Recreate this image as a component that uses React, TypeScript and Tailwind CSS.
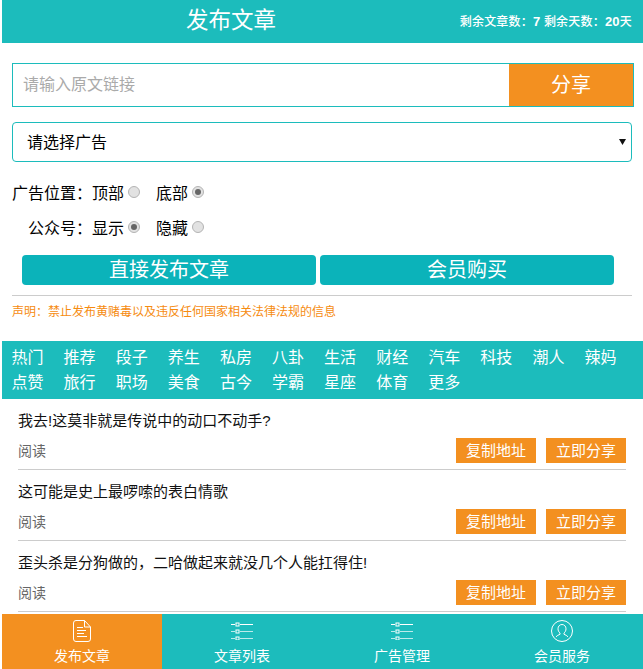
// App.tsx
const channels = [
  '热门', '推荐', '段子', '养生', '私房', '八卦', '生活', '财经', '汽车', '科技', '潮人', '辣妈',
  '点赞', '旅行', '职场', '美食', '古今', '学霸', '星座', '体育', '更多',
];

const articles = [
  '我去!这莫非就是传说中的动口不动手?',
  '这可能是史上最啰嗦的表白情歌',
  '歪头杀是分狗做的，二哈做起来就没几个人能扛得住!',
];

function Radio({ checked }: { checked?: boolean }) {
  return (
    <span className="-mt-[3px] ml-[4px] flex h-[12px] w-[12px] items-center justify-center rounded-full border border-[#b4b4b4] bg-[#e2e2e2]">
      {checked && <span className="h-[6px] w-[6px] rounded-full bg-[#666666]" />}
    </span>
  );
}

function DocIcon() {
  return (
    <svg width="18" height="22" viewBox="0 0 18 22" fill="none" stroke="#fff" strokeWidth="1">
      <path d="M3 .5h8.500l6 6.500v12a2.500 2.500 0 0 1-2.500 2.500H3A2.500 2.500 0 0 1 .5 19V3A2.500 2.500 0 0 1 3 .5z" />
      <path d="M11.500 .5V7h6" />
      <path d="M4 7.500h6M4 10.500h9M4 13.500h7M4 16.500h10" />
    </svg>
  );
}

function ListIcon() {
  return (
    <svg width="22" height="18" viewBox="0 0 22 18" fill="none" stroke="#fff" strokeWidth="1">
      <path d="M0 2.500h4M9 2.500h13" />
      <path d="M0 9.500h4M9 9.500h13M0 16.500h4M9 16.500h13" strokeOpacity="0.7" />
      <rect x="5" y="1" width="3" height="3" />
      <rect x="5" y="8" width="3" height="3" />
      <rect x="5" y="15" width="3" height="3" />
    </svg>
  );
}

function UserIcon() {
  return (
    <svg width="22" height="22" viewBox="0 0 22 22" fill="none" stroke="#fff" strokeWidth="1">
      <circle cx="11" cy="11" r="10.500" />
      <path d="M11 4.500c-2.400 0-4 1.900-4 4.300 0 1.800.8 3.300 2 4.200v1.300c-1.500.6-3 1.300-4 2.500M11 4.500c2.400 0 4 1.900 4 4.300 0 1.800-.8 3.300-2 4.200v1.300c1.500.6 3 1.300 4 2.500" />
    </svg>
  );
}

function Tab({ label, icon, active }: { label: string; icon: React.ReactNode; active?: boolean }) {
  return (
    <div className={`flex h-full w-[160px] flex-col items-center text-[14px] leading-[20px] text-white ${active ? 'bg-[#f39020]' : ''}`}>
      <div className="flex h-[31px] items-center pt-[3px]">{icon}</div>
      <div className="mt-[1px]">{label}</div>
    </div>
  );
}

export default function App() {
  return (
    <div className="flex h-screen flex-col overflow-hidden bg-white pl-[2px] font-['Liberation_Sans','Noto_Sans_CJK_SC',sans-serif]">
      <main className="flex-1 overflow-hidden">
        <header className="flex h-[43px] items-center justify-between bg-[#1cbcbc] pl-[184px] pr-[11px] text-white">
          <h1 className="text-[22.500px] leading-none">发布文章</h1>
          <p className="text-[12px] font-medium tracking-[0.2px]">
            剩余文章数：<b className="text-[13px] font-bold">7</b> 剩余天数：<b className="text-[13px] font-bold">20</b>天
          </p>
        </header>

        <section className="pl-[10px] pr-[9px]">
          <div className="mt-[20px] flex h-[44px] border border-[#1cbcbc]">
            <input
              className="min-w-0 flex-1 pb-[1px] pl-[10px] text-[16px] outline-none placeholder:text-[#aaaaaa]"
              placeholder="请输入原文链接"
            />
            <button className="w-[124px] bg-[#f39020] text-[20px] text-white">分享</button>
          </div>

          <div className="relative mt-[15px] w-[620px]">
            <select className="h-[40px] w-full appearance-none rounded-[4px] border border-[#1cbcbc] bg-white pl-[14px] pt-[1px] text-[16px] text-black outline-none">
              <option>请选择广告</option>
            </select>
            <svg className="absolute right-[6px] top-[16px]" width="7" height="7" viewBox="0 0 7 7">
              <path d="M0 1h7L3.500 7z" fill="#111" />
            </svg>
          </div>

          <div className="mt-[14px] flex h-[35px] items-center text-[16px] text-black">
            <span>广告位置：顶部</span>
            <Radio />
            <span className="ml-[16px]">底部</span>
            <Radio checked />
          </div>
          <div className="flex h-[35px] items-center pl-[16px] text-[16px] text-black">
            <span>公众号：显示</span>
            <Radio checked />
            <span className="ml-[16px]">隐藏</span>
            <Radio />
          </div>

          <div className="mt-[9px] flex gap-[4px] px-[10px]">
            <button className="h-[30px] w-[294px] rounded-[4px] bg-[#0bb3ba] text-[20px] leading-none text-white">直接发布文章</button>
            <button className="h-[30px] w-[294px] rounded-[4px] bg-[#0bb3ba] text-[20px] leading-none text-white">会员购买</button>
          </div>

          <div className="mt-[10px] w-[620px] border-t border-[#cccccc]" />
          <p className="mt-[8px] text-[12px] leading-[16px] text-[#f68b0f]">声明：禁止发布黄赌毒以及违反任何国家相关法律法规的信息</p>
        </section>

        <nav className="mt-[21px] flex h-[58px] flex-wrap content-start gap-x-[20.100px] bg-[#1cbcbc] pl-[9.500px] pr-[2px] py-[4px] text-[16px] leading-[25px] text-white">
          {channels.map((name) => (
            <span key={name} className="w-[32px]">{name}</span>
          ))}
        </nav>

        <ul>
          {articles.map((title) => (
            <li key={title} className="ml-[16px] mr-[17px] h-[71px] border-b border-[#cccccc] pt-[12px]">
              <h2 className="text-[15px] leading-[20px] text-[#111111]">{title}</h2>
              <div className="mt-[7px] flex items-center justify-between">
                <span className="pt-[2px] text-[14px] text-[#666666]">阅读</span>
                <div className="flex gap-[10px]">
                  <button className="h-[25px] w-[80px] bg-[#f39020] pt-[1px] text-[15px] text-white">复制地址</button>
                  <button className="h-[25px] w-[80px] bg-[#f39020] pt-[1px] text-[15px] text-white">立即分享</button>
                </div>
              </div>
            </li>
          ))}
        </ul>
      </main>

      <footer className="flex h-[55px] shrink-0 bg-[#1cbcbc]">
        <Tab label="发布文章" icon={<DocIcon />} active />
        <Tab label="文章列表" icon={<ListIcon />} />
        <Tab label="广告管理" icon={<ListIcon />} />
        <Tab label="会员服务" icon={<UserIcon />} />
      </footer>
    </div>
  );
}
